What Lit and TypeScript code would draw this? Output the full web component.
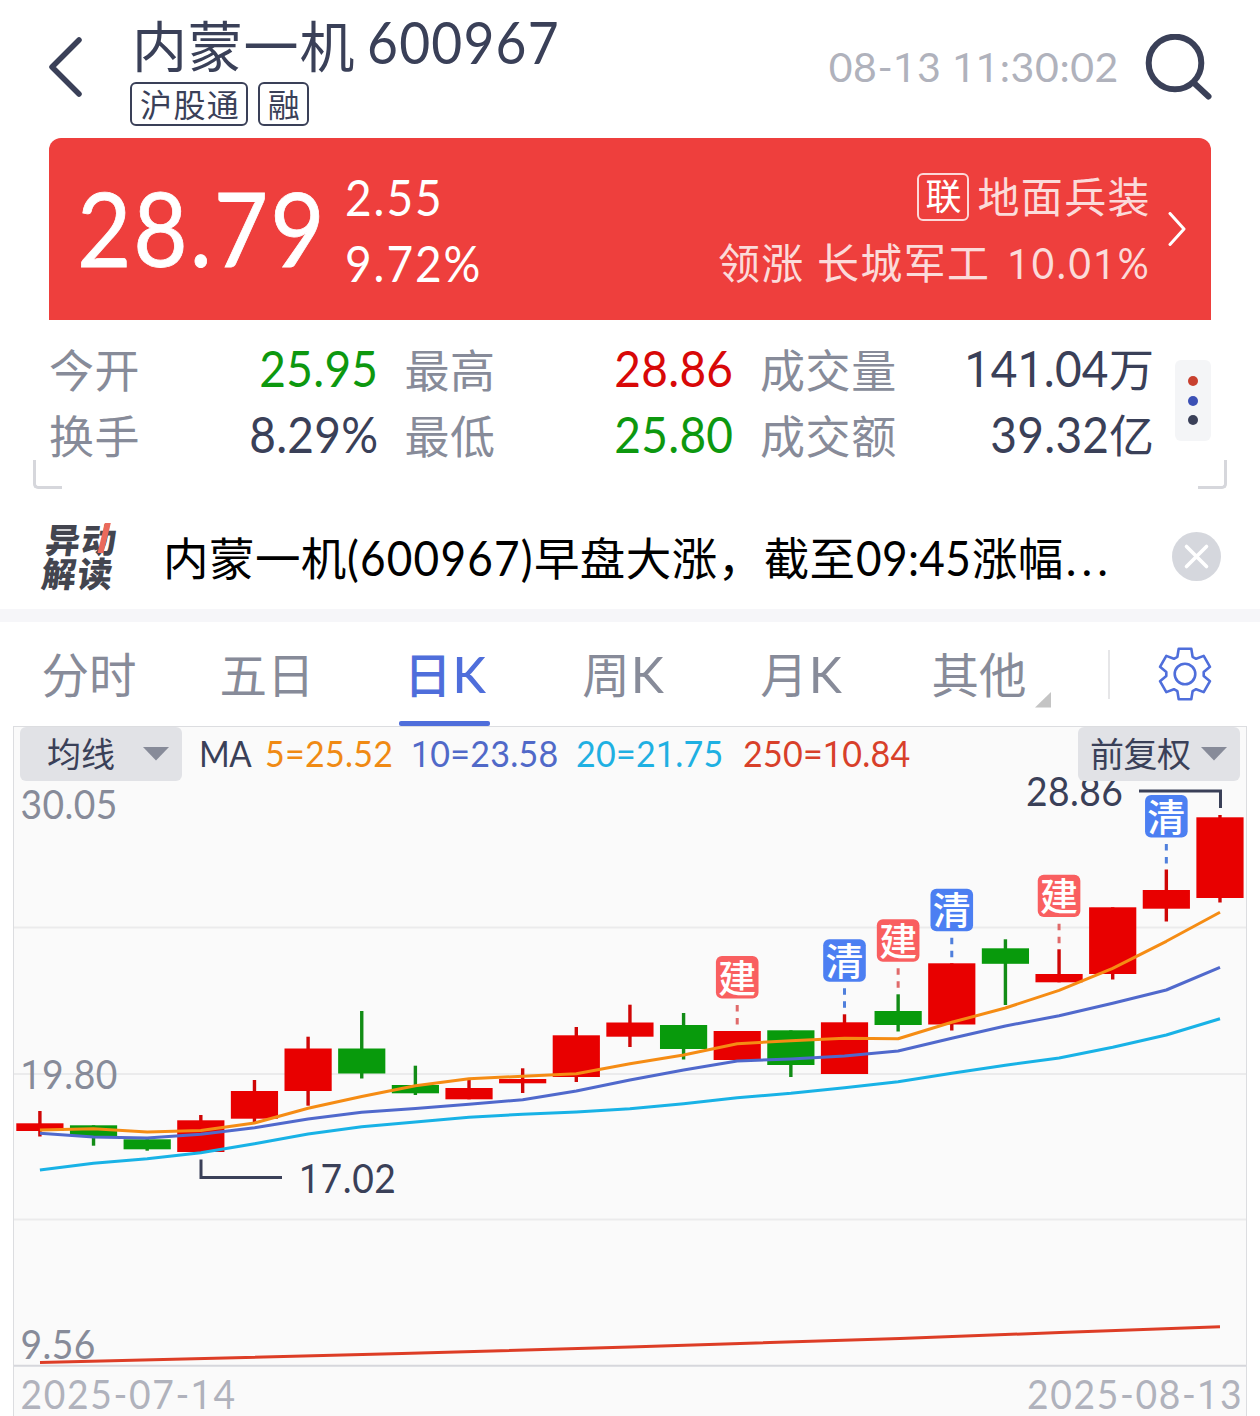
import { LitElement, html, svg, css } from "lit";
import { customElement } from "lit/decorators.js";

const ones = (s: string) =>
  s.split(/(1+)/).map((p) => (p[0] === "1" ? html`<span class="one">${p}</span>` : p));
const svgOnes = (s: string) =>
  s.split(/(1+)/).map((p) => (p[0] === "1" ? svg`<tspan class="one">${p}</tspan>` : p));

type Candle = [up: number, high: number, top: number, bottom: number, low: number];
const CANDLES: Candle[] = [
  [1, 1111, 1123.3, 1131, 1136.5],
  [0, 1125.3, 1125.3, 1136, 1145.7],
  [0, 1139.3, 1139.3, 1149.3, 1150.7],
  [1, 1115, 1120.3, 1152, 1152],
  [1, 1080, 1091, 1118.7, 1122.3],
  [1, 1036.7, 1048.5, 1091, 1105.7],
  [0, 1011, 1048.5, 1073.5, 1078.5],
  [0, 1065.7, 1085, 1093.3, 1095],
  [1, 1080, 1088, 1099.3, 1099.3],
  [1, 1068.3, 1079, 1083.3, 1093],
  [1, 1027, 1035.3, 1077, 1082],
  [1, 1004.7, 1022.5, 1036.7, 1047],
  [0, 1013, 1025, 1049, 1059.5],
  [1, 1031, 1031, 1060, 1060],
  [0, 1030.3, 1030.3, 1065, 1077],
  [1, 1014.3, 1022.3, 1074, 1074],
  [0, 994.3, 1011, 1025, 1031.5],
  [1, 963.3, 963.3, 1024.5, 1030.5],
  [0, 939.3, 948.3, 963.8, 1005],
  [1, 949.3, 974, 982.3, 982.3],
  [1, 907.3, 907.3, 974, 979.5],
  [1, 869.5, 890, 908.7, 921.5],
  [1, 815, 817.3, 898, 902.5],
];
const MA5 = [1130, 1128.7, 1132, 1130.5, 1123, 1108.3, 1096.5, 1085.7, 1078.7, 1076.3, 1073.7, 1063.7, 1055, 1043.7, 1040.7, 1038.3, 1038.7, 1022.3, 1008, 990.3, 968.3, 941.3, 912.3];
const MA10 = [1133.3, 1137, 1138, 1134.3, 1127.7, 1119, 1112.3, 1108.5, 1104.3, 1099.7, 1091, 1080, 1070, 1061, 1059, 1056, 1051, 1038.3, 1026, 1015.7, 1003.3, 990, 967.3];
const MA20 = [1170, 1163.3, 1158.7, 1152.7, 1143.7, 1134, 1126.7, 1122, 1117.3, 1114.3, 1112, 1108.7, 1103.7, 1097.7, 1093.3, 1087.7, 1081.7, 1073.3, 1065.3, 1058, 1047.3, 1035, 1018.7];
const SIGNALS: [index: number, label: string, top: number][] = [
  [13, "建", 956], [15, "清", 939.3], [16, "建", 919.3], [17, "清", 888.8], [19, "建", 874.7], [21, "清", 795],
];
const cx = (i: number) => 39.9 + i * 53.64;
const pts = (a: number[]) => a.map((y, i) => `${cx(i).toFixed(1)},${y}`).join(" ");

@customElement("stock-chart")
export class StockChart extends LitElement {
  static styles = css`
    :host { display: block; height: 690px; }
    svg { display: block; }
    text { font-family: Lato, "Noto Sans CJK SC", sans-serif; font-size: 40.5px; }
    .one { font-family: Roboto, sans-serif; }
    .axis { fill: #878b99; }
    .date { fill: #b0b2bc; }
    .mark { fill: #3a4058; }
    .grid { stroke: #ebebec; stroke-width: 2; }
    .base { stroke: #d6d7dc; stroke-width: 2; }
    .callout { stroke: #3a4058; stroke-width: 3; fill: none; }
    .up { fill: #e80000; }
    .down { fill: #089a0c; }
    .upw { fill: #cf0606; }
    .downw { fill: #128c16; }
    .line { fill: none; stroke-width: 3; stroke-linejoin: round; }
    .m5 { stroke: #f58c14; }
    .m10 { stroke: #5069cc; }
    .m20 { stroke: #18b2e6; }
    .m250 { stroke: #dd3d26; }
    .build { fill: #f95f60; }
    .clear { fill: #4c7ff2; }
    .bd { stroke: #e06a6a; stroke-width: 3; stroke-dasharray: 6.5; }
    .cd { stroke: #4f7fdc; stroke-width: 3; stroke-dasharray: 6.5; }
    .tag { fill: #fff; font-size: 38px; font-weight: 500; text-anchor: middle; }
  `;

  private candle([up, high, top, bottom, low]: Candle, i: number) {
    const x = cx(i);
    return svg`
      <rect class=${up ? "upw" : "downw"} x=${x - 1.7} y=${high} width="3.4" height=${low - high}></rect>
      <rect class=${up ? "up" : "down"} x=${x - 23.6} y=${top} width="47.2" height=${bottom - top}></rect>`;
  }

  private signal(i: number, label: string, top: number) {
    const x = cx(i);
    const b = label === "建";
    return svg`
      <rect class=${b ? "build" : "clear"} x=${x - 21.3} y=${top} width="42.6" height="42.4" rx="6"></rect>
      <text class="tag" x=${x} y=${top + 35.5}>${label}</text>
      <line class=${b ? "bd" : "cd"} x1=${x} x2=${x} y1=${top + 49} y2=${top + 69}></line>`;
  }

  /* Condensed figures: the glyphs are narrowed and spaced out to the given width. */
  private figures(cls: string, s: string, x: number, y: number, w: number) {
    return svg`<text class=${cls} transform="translate(${x} ${y}) scale(0.92 1)" textLength=${(w / 0.92).toFixed(1)}>${svgOnes(s)}</text>`;
  }

  render() {
    return html`
      <svg width="1260" height="690" viewBox="0 726 1260 690">
        <rect x="13.5" y="726.5" width="1233" height="700" fill="#fafafa" stroke="#dcdde0"></rect>
        <line class="grid" x1="14" x2="1246" y1="927.5" y2="927.5"></line>
        <line class="grid" x1="14" x2="1246" y1="1074" y2="1074"></line>
        <line class="grid" x1="14" x2="1246" y1="1219.5" y2="1219.5"></line>
        ${this.figures("axis", "30.05", 20.5, 819, 97)}
        ${this.figures("axis", "19.80", 20.5, 1089, 97)}
        ${this.figures("axis", "9.56", 20.5, 1359, 75)}
        <line class="base" x1="14" x2="1246" y1="1365.7" y2="1365.7"></line>
        ${CANDLES.map((c, i) => this.candle(c, i))}
        <polyline class="line m20" points=${pts(MA20)}></polyline>
        <polyline class="line m10" points=${pts(MA10)}></polyline>
        <polyline class="line m5" points=${pts(MA5)}></polyline>
        <polyline class="line m250" points="40,1362.5 402,1353.5 630,1347 900,1338.5 1060,1332.5 1220,1326.7"></polyline>
        <polyline class="callout" points="1139,791 1220.5,791 1220.5,808"></polyline>
        ${this.figures("mark", "28.86", 1026, 806, 97)}
        <polyline class="callout" points="201,1159.5 201,1177.5 282,1177.5"></polyline>
        ${this.figures("mark", "17.02", 299, 1193, 97)}
        ${SIGNALS.map(([i, l, t]) => this.signal(i, l, t))}
        ${this.figures("date", "2025-07-14", 20.5, 1409, 214.5)}
        ${this.figures("date", "2025-08-13", 1027, 1409, 214.5)}
      </svg>`;
  }
}

const gearPath = (() => {
  const p: string[] = [];
  for (let k = 0; k < 6; k++) {
    for (const [a, r] of [[-24, 18.8], [-14, 26], [14, 26], [24, 18.8]]) {
      const t = ((k * 60 + a - 90) * Math.PI) / 180;
      p.push(`${(27 + r * Math.cos(t)).toFixed(1)} ${(27 + r * Math.sin(t)).toFixed(1)}`);
    }
  }
  return `M${p.join("L")}Z`;
})();

const STATS: [label: string, value: string, unit: string, tone: string][] = [
  ["今开", "25.95", "", "green"], ["最高", "28.86", "", "red"], ["成交量", "141.04", "万", "ink"],
  ["换手", "8.29%", "", "ink"], ["最低", "25.80", "", "green"], ["成交额", "39.32", "亿", "ink"],
];
const TABS: [cjk: string, latin: string][] = [
  ["分时", ""], ["五日", ""], ["日", "K"], ["周", "K"], ["月", "K"], ["其他", ""],
];

@customElement("app-root")
export class AppRoot extends LitElement {
  static styles = css`
    :host {
      display: block; width: 1260px; height: 1416px; overflow: hidden; background: #fff; color: #3a4058;
      font-family: Lato, "Noto Sans CJK SC", sans-serif; white-space: nowrap;
    }
    * { box-sizing: border-box; }
    svg { display: block; flex: none; }
    .one { font-family: Roboto, sans-serif; line-height: 0; }
    .nl { display: inline-block; transform: scaleX(0.92); transform-origin: left; }
    .nr { display: inline-block; transform: scaleX(0.92); transform-origin: right; }
    header { display: flex; align-items: center; height: 134px; margin-bottom: 4px; padding: 0 48px 0 48px; }
    .ident { align-self: flex-start; padding-top: 15px; margin-left: 48px; flex: 1; }
    .name { height: 60px; display: flex; padding-left: 2px; }
    .name .cn { font-size: 55px; line-height: 62px; letter-spacing: 0.8px; }
    .name .code { font-size: 58px; line-height: 54px; letter-spacing: 1.3px; margin-left: 12px; }
    .tags { display: flex; gap: 10px; margin-top: 7px; }
    .tag { height: 44px; line-height: 41px; border: 2.5px solid #3a4058; border-radius: 6px; padding: 0 5.5px 0 8px; font-size: 32px; letter-spacing: 1.4px; }
    .time { font-size: 41px; color: #b0b2bc; letter-spacing: 0.6px; margin: -2px 26px 0 0; }

    .quote { height: 182px; margin: 0 49px; padding: 2px 25px 0 28px; background: #ee3f3d; border-radius: 12px 12px 0 0; color: #fff; display: flex; align-items: center; }
    .price { font-size: 102px; line-height: 102px; letter-spacing: 2.1px; margin-top: -5px; -webkit-text-stroke: 0.8px #fff; }
    .delta { margin-left: -3px; font-size: 50px; line-height: 66px; flex: 1; letter-spacing: 2.1px; }
    .sector { text-align: right; font-size: 42px; line-height: 66px; color: rgba(255, 255, 255, 0.82); letter-spacing: 1.4px; margin-right: 17px; }
    .sector .row { display: flex; align-items: center; justify-content: flex-end; }
    .sector .nr { letter-spacing: 2.8px; margin-left: -8px; }
    .link { width: 52px; height: 48px; border: 2px solid rgba(255, 255, 255, 0.8); border-radius: 6px; font-size: 36px; line-height: 43px; color: #fff; text-align: center; letter-spacing: 0; margin-right: 8px; }
    .go { margin-top: -3px; }

    .summary { position: relative; display: flex; height: 170px; padding: 18px 49px 0 49px; }
    .stats { display: grid; grid-template-columns: 329px 329px 394px; column-gap: 26.5px; grid-template-rows: 66px 65px; }
    .stat { display: flex; justify-content: space-between; height: 66px; line-height: 66px; font-size: 45px; }
    .label { color: #878b99; letter-spacing: 0.6px; }
    .num { font-size: 50px; letter-spacing: 0.3px; line-height: 60px; vertical-align: 2px; }
    .unit { line-height: 60px; vertical-align: 2px; }
    .green { color: #0d980f; }
    .red { color: #d80808; }
    .ink { color: #3a4058; }
    .more { width: 36px; height: 81px; margin: 22px 0 0 21px; background: #f4f5f7; border-radius: 6px; display: flex; flex-direction: column; align-items: center; justify-content: center; gap: 9.5px; }
    .dot { width: 10px; height: 10px; border-radius: 50%; }
    .d1 { background: #c8402f; }
    .d2 { background: #3b50b5; }
    .d3 { background: #3a4058; }
    .corner { position: absolute; bottom: 1px; width: 29px; height: 29px; border-bottom: 3px solid #d6d7dc; }
    .cl { left: 33px; border-left: 3px solid #d6d7dc; border-bottom-left-radius: 5px; }
    .cr { right: 33px; border-right: 3px solid #d6d7dc; border-bottom-right-radius: 5px; }

    .notice { display: flex; align-items: center; height: 132px; padding: 0 39px 0 44px; border-bottom: 13px solid #f6f6f9; }
    .logo { position: relative; width: 72px; font-size: 34.5px; line-height: 33.5px; font-weight: 900; color: #43454f; letter-spacing: 1.5px; transform: skewX(-7deg); margin-top: 11px; font-family: "Noto Sans CJK SC", sans-serif; }
    .slash { position: absolute; left: 54.5px; top: 1px; width: 5.5px; height: 30px; background: #ea6a5c; transform: skewX(-7deg); }
    .headline { flex: 1; margin-left: 47px; font-size: 45.5px; letter-spacing: 0.45px; line-height: 60px; color: #000; padding-top: 18px; }
    .headline b { font-weight: 400; font-size: 48px; letter-spacing: 1.3px; line-height: 0; margin-right: -16px; }
    .headline b.t { letter-spacing: 0.4px; margin-right: -9px; }
    .headline .el { letter-spacing: 5px; margin-left: 2px; }
    .close { margin-top: 14px; }

    nav { display: flex; align-items: center; height: 104px; color: #878b99; }
    .tab { position: relative; width: 178px; height: 104px; line-height: 105px; text-align: center; font-size: 47.5px; }
    .tab i { font-style: normal; font-size: 50px; line-height: 0; margin-left: 1px; }
    .active { color: #4f6edb; font-weight: 500; }
    .active::after { content: ""; position: absolute; left: 43px; bottom: 0; width: 91px; height: 5px; border-radius: 2px; background: #4f6edb; }
    .corner-mark { position: absolute; left: 145px; top: 70px; }
    .sep { width: 2px; height: 49px; background: #e6e6e8; margin: 0 48px 0 40px; }

    .panel { display: grid; }
    .panel > * { grid-area: 1 / 1; }
    .legend { z-index: 1; display: flex; align-self: start; padding: 1px 20px 0 20px; line-height: 51px; font-size: 37px; }
    .pick { width: 162px; height: 54px; background: #e1e2e6; border-radius: 6px; display: flex; align-items: center; justify-content: space-between; font-size: 34px; line-height: 52px; }
    .p1 { padding: 0 13px 0 27px; }
    .p2 { padding: 0 13px 0 12px; margin-left: auto; letter-spacing: -0.5px; }
    .ma { margin-left: 17px; font-size: 36px; line-height: 53px; width: 53px; letter-spacing: -0.5px; }
    .v { letter-spacing: 0.25px; margin-left: 12.5px; }
    .v5 { color: #f08a14; width: 128px; }
    .v10 { color: #5069c8; margin-left: 18.5px; width: 147px; }
    .v20 { color: #1fb0e2; margin-left: 18px; width: 147px; }
    .v250 { color: #d8402a; margin-left: 19.5px; width: 170px; }
  `;

  render() {
    const caret = html`<svg width="26" height="14" viewBox="0 0 26 14"><path d="M0 0H26L13 13.5Z" fill="#878b99"></path></svg>`;
    return html`
      <header>
        <svg width="34" height="60" viewBox="0 0 34 60"><path d="M31 3L4 30L31 57" fill="none" stroke="#3a4058" stroke-width="5.5" stroke-linecap="round" stroke-linejoin="round"></path></svg>
        <div class="ident">
          <div class="name"><span class="cn">内蒙一机</span><span class="code nl">600967</span></div>
          <div class="tags"><span class="tag">沪股通</span><span class="tag">融</span></div>
        </div>
        <span class="time">${ones("08-13 11:30:02")}</span>
        <svg width="67" height="66" viewBox="0 0 67 66"><circle cx="30" cy="29" r="26.3" fill="none" stroke="#3a4058" stroke-width="6"></circle><path d="M49 49L63.5 62.5" stroke="#3a4058" stroke-width="6" stroke-linecap="round"></path></svg>
      </header>

      <section class="quote">
        <span class="price nl">28.79</span>
        <div class="delta"><div class="nl">2.55</div><br><div class="nl">9.72%</div></div>
        <div class="sector">
          <div class="row"><span class="link">联</span>地面兵装</div>
          <div>领涨 长城军工 <span class="nr">${ones("10.01%")}</span></div>
        </div>
        <svg class="go" width="18" height="34" viewBox="0 0 18 34"><path d="M2 1.5L16 17L2 32.5" fill="none" stroke="#fff" stroke-width="3" stroke-linecap="round" stroke-linejoin="round"></path></svg>
      </section>

      <section class="summary">
        <div class="stats">
          ${STATS.map(([l, v, u, t]) => html`<div class="stat"><span class="label">${l}</span><span class=${t}><span class="num nr">${ones(v)}</span>${u ? html`<span class="unit">${u}</span>` : ""}</span></div>`)}
        </div>
        <div class="more"><span class="dot d1"></span><span class="dot d2"></span><span class="dot d3"></span></div>
        <span class="corner cl"></span><span class="corner cr"></span>
      </section>

      <section class="notice">
        <div class="logo"><div>异动</div><div>解读</div><span class="slash"></span></div>
        <div class="headline">内蒙一机<b class="nl">(600967)</b>早盘大涨，截至<b class="nl t">09:45</b>涨幅<span class="el">...</span></div>
        <svg class="close" width="49" height="49" viewBox="0 0 49 49"><circle cx="24.5" cy="24.5" r="24.5" fill="#d5d7dd"></circle><path d="M14.5 14.5L34.5 34.5M34.5 14.5L14.5 34.5" stroke="#fff" stroke-width="3.6" stroke-linecap="round"></path></svg>
      </section>

      <nav>
        ${TABS.map(([c, k], i) => html`<div class="tab ${i === 2 ? "active" : ""}">${c}${k ? html`<i>${k}</i>` : ""}${i === 5 ? html`<svg class="corner-mark" width="16" height="16"><path d="M16 0V15.5H0Z" fill="#c4c4c4"></path></svg>` : ""}</div>`)}
        <span class="sep"></span>
        <svg width="54" height="54" viewBox="0 0 54 54" fill="none" stroke="#4f6edb" stroke-width="2.6" stroke-linejoin="round"><path d=${gearPath}></path><circle cx="27" cy="27" r="10.3"></circle></svg>
      </nav>

      <div class="panel">
        <stock-chart></stock-chart>
        <div class="legend">
          <span class="pick p1">均线${caret}</span>
          <span class="ma nl">MA</span>
          <span class="v v5 nl">5=25.52</span>
          <span class="v v10 nl">${ones("10=23.58")}</span>
          <span class="v v20 nl">${ones("20=21.75")}</span>
          <span class="v v250 nl">${ones("250=10.84")}</span>
          <span class="pick p2">前复权${caret}</span>
        </div>
      </div>`;
  }
}
